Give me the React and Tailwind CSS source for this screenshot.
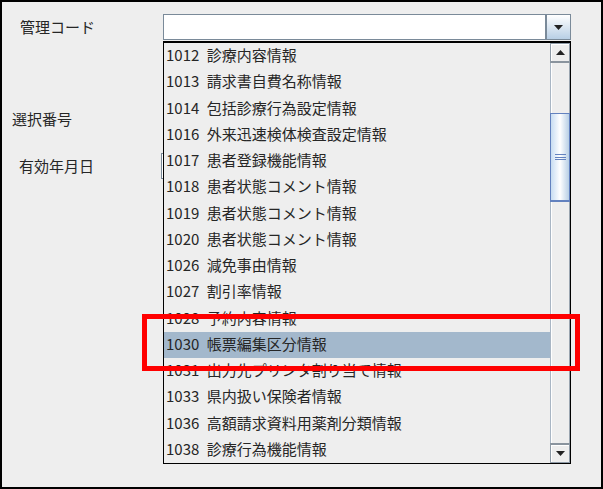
import React from 'react'

const ITEMS = [
  ['1012', '診療内容情報'],
  ['1013', '請求書自費名称情報'],
  ['1014', '包括診療行為設定情報'],
  ['1016', '外来迅速検体検査設定情報'],
  ['1017', '患者登録機能情報'],
  ['1018', '患者状態コメント情報'],
  ['1019', '患者状態コメント情報'],
  ['1020', '患者状態コメント情報'],
  ['1026', '減免事由情報'],
  ['1027', '割引率情報'],
  ['1028', '予約内容情報'],
  ['1030', '帳票編集区分情報'],
  ['1031', '出力先プリンタ割り当て情報'],
  ['1033', '県内扱い保険者情報'],
  ['1036', '高額請求資料用薬剤分類情報'],
  ['1038', '診療行為機能情報'],
]

const SELECTED = '1030'

function Arrow({ up }) {
  return (
    <svg width="9" height="5" viewBox="0 0 9 5">
      {up ? <polygon points="4.5,0 9,5 0,5" fill="#222" /> : <polygon points="0,0 9,0 4.5,5" fill="#222" />}
    </svg>
  )
}

function ScrollBar() {
  return (
    <div className="w-[20px] flex flex-col">
      <div className="h-[20px] flex items-center justify-center bg-[#eeeeee] border border-[#8e9aa6] border-b-2 border-b-[#8a949e] shadow-[inset_1px_1px_0_#ffffff]">
        <Arrow up />
      </div>
      <div className="h-[50px] bg-[#eeeeee] border-l border-[#a9b6c4] border-r border-r-[#9aa5b0] shadow-[inset_1px_0_0_#ffffff]" />
      <div className="h-[89px] flex flex-col items-center justify-center gap-[1.5px] border border-[#6382bf] border-b-2 bg-gradient-to-r from-[#c8ddf2] via-white to-[#b8cfe5]">
        <div className="h-px w-[11px] bg-[#6382bf]" />
        <div className="h-px w-[11px] bg-[#6382bf]" />
        <div className="h-px w-[11px] bg-[#6382bf]" />
      </div>
      <div className="flex-1 bg-[#eeeeee] border-l border-[#a9b6c4] border-r border-r-[#9aa5b0] shadow-[inset_1px_0_0_#ffffff]" />
      <div className="h-[20px] flex items-center justify-center bg-[#eeeeee] border border-[#8e9aa6] border-t-2 border-t-[#8a949e] shadow-[inset_1px_1px_0_#ffffff]">
        <Arrow />
      </div>
    </div>
  )
}

export default function App() {
  return (
    <div className="relative w-[603px] h-[489px] border-2 border-black bg-[#eeeeee] pt-[12px] text-[15px] text-[#262626] font-['Noto_Sans_CJK_JP','Noto_Sans',sans-serif] leading-[20px] overflow-hidden">
      {/* 管理コード */}
      <div className="flex items-center h-[26px]">
        <div className="w-[161px] pl-[18px] pb-[1px]">管理コード</div>
        <div className="w-[383px] h-[26px] bg-white border border-[#7a8a99]" />
        <div className="w-[25px] h-[26px] flex items-center justify-center border border-[#7a8a99] bg-gradient-to-b from-white to-[#b8cfe5]">
          <Arrow />
        </div>
      </div>

      {/* 選択番号 */}
      <div className="mt-[69px] pl-[10px]">選択番号</div>

      {/* 有効年月日 */}
      <div className="mt-[24px] flex items-center h-[26px]">
        <div className="w-[159px] pl-[17px] pb-[1px]">有効年月日</div>
        <div className="w-[200px] h-[26px] bg-white border border-[#7a8a99]" />
      </div>

      {/* popup list */}
      <div className="absolute left-[161px] top-[39px] w-[408px] h-[423px] border border-black border-t-2 bg-[#eeeeee] flex">
        <div className="flex-1 flex flex-col">
          {ITEMS.map(([code, name]) => (
            <div
              key={code}
              className={`h-[26.25px] flex items-center pl-[2px] pb-[2px] whitespace-nowrap [word-spacing:4px] ${code === SELECTED ? 'bg-[#a3b8cc]' : ''}`}
            >
              {code} {name}
            </div>
          ))}
        </div>
        <ScrollBar />
      </div>

      {/* red highlight annotation */}
      <div className="absolute left-[140px] top-[312px] w-[438px] h-[57px] border-[5px] border-[#ff0000]" />
    </div>
  )
}
